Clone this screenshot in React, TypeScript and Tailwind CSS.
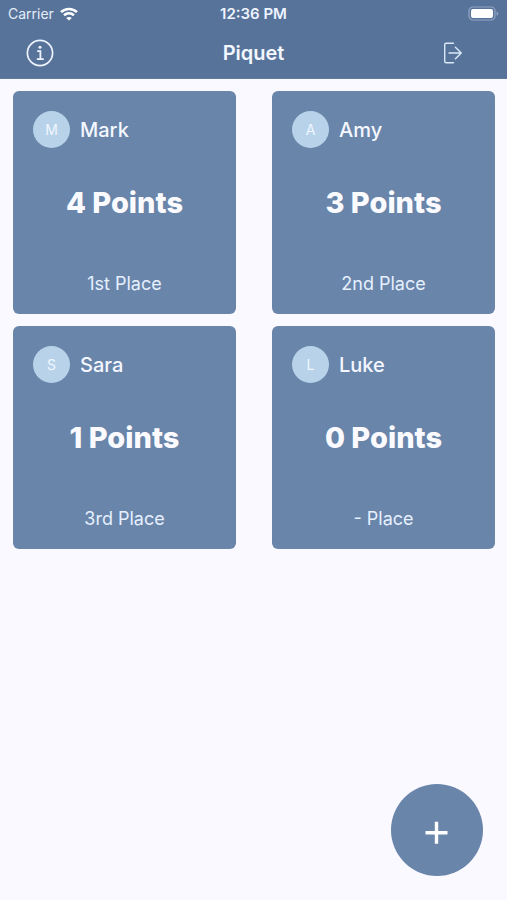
type Player = { name: string; points: number; place: string };

const players: Player[] = [
  { name: "Mark", points: 4, place: "1st" },
  { name: "Amy", points: 3, place: "2nd" },
  { name: "Sara", points: 1, place: "3rd" },
  { name: "Luke", points: 0, place: "-" },
];

function WifiIcon() {
  return (
    <svg className="h-[14px] w-[18px]" viewBox="0 0 18 14" fill="none" stroke="#fff" strokeWidth="2.6" aria-hidden="true">
      <path d="M1 5.1C5.5.9 12.5.9 17 5.1" />
      <path d="M4 8.3c2.9-2.6 7.1-2.6 10 0" />
      <path d="M9 13.6 6.2 10.9c1.6-1.3 4-1.3 5.6 0z" fill="#fff" stroke="none" />
    </svg>
  );
}

function BatteryIcon() {
  return (
    <svg className="h-[15px] w-[31px]" viewBox="0 0 31 15" aria-hidden="true">
      <rect x="1" y="1" width="26" height="13" rx="4" fill="none" stroke="#93a5c3" strokeWidth="1.2" />
      <rect x="3" y="3" width="22" height="9" rx="2" fill="#fff" />
      <path d="M28.6 5.2c2 .8 2 3.8 0 4.6z" fill="#93a5c3" />
    </svg>
  );
}

function InfoIcon() {
  return (
    <svg className="size-7" viewBox="0 0 28 28" fill="none" stroke="#edf4ff" aria-hidden="true">
      <circle cx="14" cy="14" r="12.6" strokeWidth="1.7" />
      <path d="M11.2 12.2h3.2v7.6M10.8 20.2h7" strokeWidth="1.8" />
      <circle cx="14" cy="8.2" r="1.5" fill="#edf4ff" stroke="none" />
    </svg>
  );
}

function ExitIcon() {
  return (
    <svg className="h-[22px] w-5" viewBox="0 0 20 22" fill="none" stroke="#d9e9f8" strokeWidth="1.4" strokeLinecap="round" strokeLinejoin="round" aria-hidden="true">
      <path d="M10.5 1.2H3.2Q1.7 1.2 1.7 2.7v16.6q0 1.5 1.5 1.5h7.3" />
      <path d="M6 11h12.3M12.4 5.2l5.9 5.8-5.9 5.8" />
    </svg>
  );
}

function PlayerCard({ name, points, place }: Player) {
  return (
    <article className="flex aspect-square flex-col rounded-md bg-[#6985aa] p-5">
      <div className="flex items-center gap-2.5">
        <span className="flex size-[37px] items-center justify-center rounded-full bg-[#b8d3e9] text-sm text-[#f0f6ff]" aria-hidden="true">
          {name[0]}
        </span>
        <h2 className="text-xl font-medium text-[#f4f7ff]">{name}</h2>
      </div>
      <p className="mt-[37px] text-center text-[29px] leading-9 font-extrabold text-[#fbfbff]">{points} Points</p>
      <p className="mt-auto text-center text-lg leading-5 text-[#e6f0ff]">{place} Place</p>
    </article>
  );
}

export default function App() {
  return (
    <div className="flex min-h-screen flex-col bg-[#faf9ff] font-['Inter',sans-serif]">
      <header className="border-b border-[#5e7ba0] bg-[#577399]">
        <div className="grid h-[27px] grid-cols-[1fr_auto_1fr] items-center px-2 text-sm">
          <div className="flex items-center gap-1.5 text-[#e4edfa]">
            <span>Carrier</span>
            <WifiIcon />
          </div>
          <span className="text-center text-[15px] font-semibold text-[#edf3ff]">12:36 PM</span>
          <div className="flex justify-end">
            <BatteryIcon />
          </div>
        </div>
        <div className="grid h-[51px] grid-cols-[1fr_auto_1fr] items-center px-[26px]">
          <button type="button" aria-label="Game information" className="justify-self-start">
            <InfoIcon />
          </button>
          <h1 className="text-center text-xl font-semibold text-[#f2f6ff]">Piquet</h1>
          <button type="button" aria-label="Leave game" className="flex w-14 justify-center justify-self-end">
            <ExitIcon />
          </button>
        </div>
      </header>
      <main className="grid grid-cols-2 gap-x-9 gap-y-3 py-3 pr-3 pl-[13px]">
        {players.map((player) => (
          <PlayerCard key={player.name} {...player} />
        ))}
      </main>
      <div className="sticky bottom-0 mt-auto flex justify-end p-6">
        <button
          type="button"
          aria-label="Add points"
          className="flex size-[92px] items-center justify-center rounded-full bg-[#6985aa]"
        >
          <svg className="size-[92px]" viewBox="0 0 92 92" fill="none" stroke="#fff" strokeWidth="3.4" aria-hidden="true">
            <path d="M34.5 48.7h22M45.5 37.7v22" />
          </svg>
        </button>
      </div>
    </div>
  );
}
